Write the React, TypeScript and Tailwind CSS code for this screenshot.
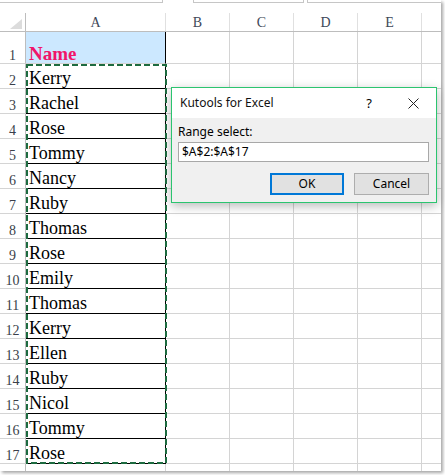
import React from "react";

const names = ["Kerry","Rachel","Rose","Tommy","Nancy","Ruby","Thomas","Rose","Emily","Thomas","Kerry","Ellen","Ruby","Nicol","Tommy","Rose"];
const other = ["w-[64px]", "w-[64px]", "w-[64px]", "w-[64px]"];

function GridRest() {
  return (
    <>
      {other.map((w, i) => (
        <div key={i} className={`${w} shrink-0 border-r border-b border-[#d4d4d4]`} />
      ))}
      <div className="w-[20px] shrink-0 border-b border-[#d4d4d4]" />
    </>
  );
}

function RowNum({ n }: { n: number }) {
  return (
    <div className="w-[26px] shrink-0 border-r border-r-[#bdbdbd] border-b border-b-[#d4d4d4] flex items-end justify-center text-[14px] leading-[15px] text-[#3a3f4a]">
      {n}
    </div>
  );
}

export default function App() {
  return (
    <div className="relative w-[445px] h-[475px] bg-white overflow-hidden font-['Liberation_Serif',serif]">
      <div className="w-[441px] h-[471px] bg-white shadow-[2px_2px_3px_rgba(0,0,0,0.35)] overflow-hidden flex flex-col">
        {/* top bar remnants */}
        <div className="h-[13px] shrink-0 flex">
          <div className="w-[163px] h-[3px] border-b border-r border-[#c6c6c6]" />
          <div className="w-[30px]" />
          <div className="w-[111px] h-[3px] border-b border-l border-r border-[#c6c6c6]" />
          <div className="w-[3px]" />
          <div className="flex-1 h-[3px] border-b border-l border-[#c6c6c6]" />
        </div>
        {/* header row */}
        <div className="h-[19px] shrink-0 flex border-b border-[#bdbdbd] text-[14px] leading-[16px] text-[#404858]">
          <div className="w-[26px] shrink-0 border-r border-[#bdbdbd] relative">
            <svg className="absolute left-[10px] top-[6px]" width="12" height="10" viewBox="0 0 12 10">
              <polygon points="12,0 12,10 0,10" fill="#dcdcdc" />
            </svg>
          </div>
          {["A", "B", "C", "D", "E"].map((c, i) => (
            <div
              key={c}
              className={`${i === 0 ? "w-[140px]" : "w-[64px]"} shrink-0 border-r border-[#e0e0e0] flex items-end justify-center`}
            >
              {c}
            </div>
          ))}
          <div className="w-[20px] shrink-0" />
        </div>
        {/* row 1 */}
        <div className="h-[32px] shrink-0 flex">
          <RowNum n={1} />
          <div className="w-[140px] shrink-0 bg-[#cce8ff] border-r border-black border-b border-b-[#d4d4d4] flex items-end pl-[3px] text-[19px] leading-[18px] font-bold text-[#f0156a]">
            Name
          </div>
          <GridRest />
        </div>
        {names.map((name, i) => (
          <div key={i} className="h-[25px] shrink-0 flex">
            <RowNum n={i + 2} />
            <div className="w-[140px] shrink-0 border-r border-black border-b border-b-black flex items-end pl-[3px] text-[18px] leading-[20px] text-black">
              {name}
            </div>
            <GridRest />
          </div>
        ))}
        <div className="h-[25px] shrink-0 flex">
          <RowNum n={18} />
          <div className="w-[140px] shrink-0 border-r border-[#d4d4d4] border-b" />
          <GridRest />
        </div>
      </div>

      {/* marching ants selection */}
      <svg className="absolute left-[26px] top-[64px]" width="141" height="400" viewBox="0 0 141 400" shapeRendering="crispEdges">
        <rect x="1" y="1" width="139" height="398" fill="none" stroke="#1d6b40" strokeWidth="2" strokeDasharray="6 3" />
      </svg>

      {/* dialog */}
      <div className="absolute left-[171px] top-[87px] w-[266px] h-[116px] border border-[#2bc46f] bg-[#f0f0f0] shadow-[0_3px_10px_rgba(0,0,0,0.28)] flex flex-col font-['Noto_Sans',sans-serif] text-[12px] text-black">
        <div className="h-[30px] bg-white flex items-center pl-[8px] shrink-0">
          <span className="leading-[16px] text-[#111]">Kutools for Excel</span>
          <span className="ml-auto leading-[16px] text-[13px]">?</span>
          <svg className="ml-[36px] mr-[17px]" width="11" height="11" viewBox="0 0 11 11">
            <path d="M0.5 0.5 L10.5 10.5 M10.5 0.5 L0.5 10.5" stroke="#222" strokeWidth="1" />
          </svg>
        </div>
        <div className="pl-[6px] pr-[7px] pt-[6px] flex flex-col">
          <div className="leading-[16px]">Range select:</div>
          <div className="mt-[2px] h-[20px] border border-[#a8a8a8] bg-white pl-[3px] leading-[18px]">$A$2:$A$17</div>
          <div className="mt-[11px] flex justify-end gap-[10px]">
            <div className="w-[74px] h-[22px] border-2 border-[#0078d7] bg-[#e1e1e1] flex items-center justify-center leading-[16px]">OK</div>
            <div className="w-[75px] h-[22px] border border-[#adadad] bg-[#e1e1e1] flex items-center justify-center leading-[16px]">Cancel</div>
          </div>
        </div>
      </div>
    </div>
  );
}
